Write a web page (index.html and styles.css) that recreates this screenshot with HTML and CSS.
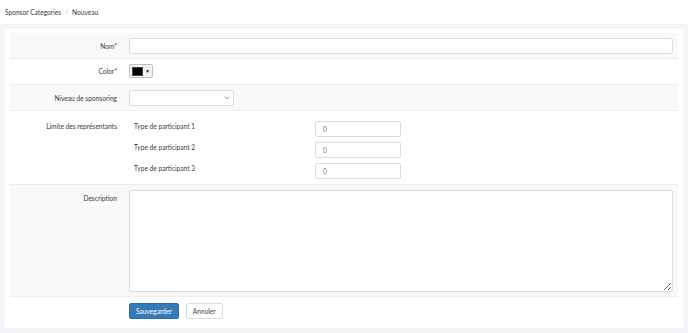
FILE: index.html
```html
<!DOCTYPE html>
<html lang="fr">
<head>
  <meta charset="UTF-8" />
  <title>Sponsor Categories - Nouveau</title>
  <link rel="stylesheet" href="styles.css">
</head>
<body>

  <!-- Breadcrumb -->
  <div class="topbar">
    <span class="crumb">Sponsor Categories</span>
    <span class="sep">/</span>
    <span class="crumb">Nouveau</span>
  </div>

  <div class="content">
    <form class="card">

      <div class="row alt">
        <label class="label">Nom*</label>
        <div class="field"><input class="input wide" type="text"></div>
      </div>

      <div class="row row-color">
        <label class="label">Color*</label>
        <div class="field">
          <button type="button" class="color-pick">
            <span class="swatch"></span>
            <span class="caret">&#9660;</span>
          </button>
        </div>
      </div>

      <div class="row alt">
        <label class="label">Niveau de sponsoring</label>
        <div class="field">
          <div class="select">
            <svg width="6" height="4" viewBox="0 0 6 4"><path d="M0.5 0.5 L3 3 L5.5 0.5" fill="none" stroke="#888" stroke-width="0.8"/></svg>
          </div>
        </div>
      </div>

      <div class="row row-limits">
        <label class="label">Limite des représentants</label>
        <div class="field">
          <div class="limits">
            <span class="limit-name">Type de participant 1</span>
            <input class="input small" type="text" value="0">
            <span class="limit-name">Type de participant 2</span>
            <input class="input small" type="text" value="0">
            <span class="limit-name">Type de participant 3</span>
            <input class="input small" type="text" value="0">
          </div>
        </div>
      </div>

      <div class="row alt">
        <label class="label">Description</label>
        <div class="field"><textarea class="input area"></textarea></div>
      </div>

      <div class="actions">
        <button type="button" class="btn btn-primary">Sauvegarder</button>
        <button type="button" class="btn btn-default">Annuler</button>
      </div>

    </form>
  </div>

</body>
</html>
```

FILE: styles.css
```css
* {
  box-sizing: border-box;
}

body {
  margin: 0;
  font-family: 'Lato', sans-serif;
  font-size: 6.6px;
  color: #3a3a3a;
  background: #f3f4f8;
}

.topbar {
  height: 24px;
  background: #fff;
  padding: 0 5px;
  display: flex;
  align-items: center;
  gap: 4px;
}

.topbar .sep {
  color: #bbb;
}

.content {
  padding: 5px 5px 6px;
}

.card {
  background: #fff;
  border-radius: 2px;
  padding: 4px 5px 9px;
}

.row {
  display: grid;
  grid-template-columns: 119px 1fr;
  padding: 5px 5px 4px 0;
  border-bottom: 1px solid #eeeeee;
}

.row.alt {
  background: #f9f9f9;
}

.label {
  text-align: right;
  padding-right: 12px;
  line-height: 16px;
  color: #3a3a3a;
}

.input {
  display: block;
  height: 16px;
  border: 1px solid #dcdcdc;
  border-radius: 2px;
  background: #fff;
  font-family: inherit;
  font-size: 6.6px;
  color: #777;
  padding: 0 7px;
  outline: none;
}

.input.wide {
  width: 100%;
}

.row-color {
  padding-bottom: 5px;
}

.row-color .label {
  line-height: 15px;
}

.color-pick {
  display: flex;
  align-items: center;
  width: 24px;
  height: 14px;
  padding: 0 2px;
  border: 1px solid #c7bfb6;
  border-radius: 2px;
  background: #f4f2f0;
  gap: 2px;
}

.swatch {
  width: 13px;
  height: 9px;
  background: #000;
  border: 1px solid #444;
}

.caret {
  font-size: 5px;
  color: #222;
  line-height: 1;
}

.select {
  width: 105px;
  height: 16px;
  border: 1px solid #dcdcdc;
  border-radius: 2px;
  background: #fff;
  display: flex;
  align-items: center;
  justify-content: flex-end;
  padding-right: 3px;
}

.row-limits {
  padding-top: 10px;
  padding-bottom: 5px;
}

.row-limits .label {
  line-height: 10px;
}

.limits {
  display: grid;
  grid-template-columns: 181px 86px;
  row-gap: 5px;
  padding-left: 5px;
  align-items: start;
}

.limit-name {
  line-height: 10px;
}

.input.small {
  width: 86px;
}

.area {
  width: 100%;
  height: 102px;
  resize: vertical;
  padding: 4px 7px;
}

.actions {
  display: flex;
  gap: 7px;
  padding: 6px 0 0 119px;
}

.btn {
  height: 16px;
  padding: 0 6px;
  border-radius: 2px;
  font-family: inherit;
  font-size: 6.6px;
  cursor: pointer;
}

.btn-primary {
  background: #337ab7;
  border: 1px solid #2e6da4;
  color: #fff;
}

.btn-default {
  background: #fff;
  border: 1px solid #dcdcdc;
  color: #444;
}
```
